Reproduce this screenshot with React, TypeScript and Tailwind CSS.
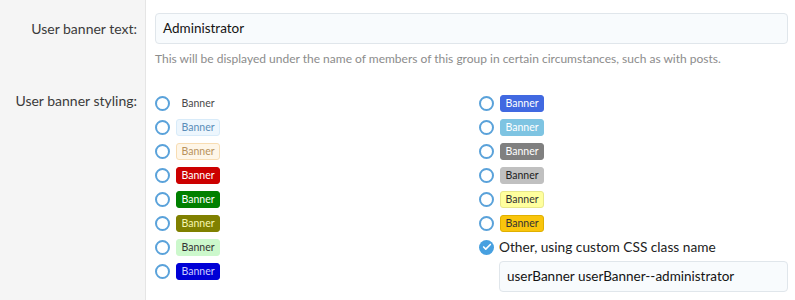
import { Check } from "lucide-react";

type BannerStyle = {
  key: string;
  className: string;
};

const leftBanners: BannerStyle[] = [
  { key: "hidden", className: "text-[#4a4a4a] border-transparent bg-transparent" },
  { key: "primary", className: "text-[#5a8db8] bg-[#edf6fd] border-[#d8ebf9]" },
  { key: "accent", className: "text-[#b8925c] bg-[#fef6e8] border-[#f8ddb3]" },
  { key: "red", className: "text-white bg-[#cc0000] border-[#cc0000]" },
  { key: "green", className: "text-white bg-[#008000] border-[#008000]" },
  { key: "olive", className: "text-[#f7f7b0] bg-[#808000] border-[#808000]" },
  { key: "lightGreen", className: "text-[#333] bg-[#ccf8cc] border-[#ccf8cc]" },
  { key: "blue", className: "text-[#ccccff] bg-[#0000d6] border-[#0000d6]" },
];

const rightBanners: BannerStyle[] = [
  { key: "royalBlue", className: "text-white bg-[#4169e1] border-[#4169e1]" },
  { key: "skyBlue", className: "text-white bg-[#7ec4e2] border-[#7ec4e2]" },
  { key: "gray", className: "text-white bg-[#808080] border-[#808080]" },
  { key: "silver", className: "text-[#222] bg-[#c0c0c0] border-[#c0c0c0]" },
  { key: "yellow", className: "text-[#333] bg-[#ffff9e] border-[#e8e88a]" },
  { key: "orange", className: "text-[#333] bg-[#f9c50c] border-[#e0b000]" },
];

function Radio({ checked = false }: { checked?: boolean }) {
  if (checked) {
    return (
      <span className="w-[15px] h-[15px] rounded-full bg-[#47a0e0] flex items-center justify-center shrink-0">
        <Check className="w-[10px] h-[10px] text-white" strokeWidth={4} />
      </span>
    );
  }
  return <span className="w-[15px] h-[15px] rounded-full border-2 border-[#5aa2da] bg-white shrink-0" />;
}

function BannerOption({ banner }: { banner: BannerStyle }) {
  return (
    <div className="h-6 flex items-center gap-[6px]">
      <Radio />
      <span
        className={
          "w-[44px] h-[17px] rounded-[3px] border text-[10.5px] leading-none flex items-center justify-center " +
          banner.className
        }
      >
        Banner
      </span>
    </div>
  );
}

export default function App() {
  return (
    <div
      className="w-[795px] h-[300px] overflow-hidden bg-white flex"
      style={{ fontFamily: 'Lato, "Noto Sans", sans-serif' }}
    >
      {/* Label column */}
      <div className="w-[146px] shrink-0 bg-[#f5f5f5] border-r border-[#e5e5e5] text-[14px] text-[#3b3b3b] text-right pr-[8px] whitespace-nowrap">
        <div className="h-[58px] pt-[17px] leading-[24px]">User banner text:</div>
        <div className="pt-[31px] leading-[24px]">User banner styling:</div>
      </div>

      {/* Content column */}
      <div className="flex-1 pl-[9px] pr-[7px] pt-[13px]">
        <div className="h-[31px] rounded-[4px] border border-[#e0e6eb] bg-[#f8fbfd] px-[7px] flex items-center text-[13.5px] text-[#141414]">
          Administrator
        </div>
        <p className="mt-[6px] text-[12px] text-[#8c8c8c] leading-[18px] whitespace-nowrap">
          This will be displayed under the name of members of this group in certain circumstances, such as with posts.
        </p>

        <div className="mt-[23px] grid grid-cols-[324px_1fr]">
          <div className="flex flex-col">
            {leftBanners.map((b) => (
              <BannerOption key={b.key} banner={b} />
            ))}
          </div>
          <div className="flex flex-col">
            {rightBanners.map((b) => (
              <BannerOption key={b.key} banner={b} />
            ))}
            <div className="h-6 flex items-center gap-[5px] text-[13.7px] text-[#222]">
              <Radio checked />
              <span>Other, using custom CSS class name</span>
            </div>
            <div className="mt-[2px] ml-[20px] h-[31px] rounded-[4px] border border-[#e0e6eb] bg-[#f8fbfd] px-[7px] flex items-center text-[13.5px] text-[#141414] whitespace-nowrap">
              userBanner userBanner--administrator
            </div>
          </div>
        </div>
      </div>
    </div>
  );
}
